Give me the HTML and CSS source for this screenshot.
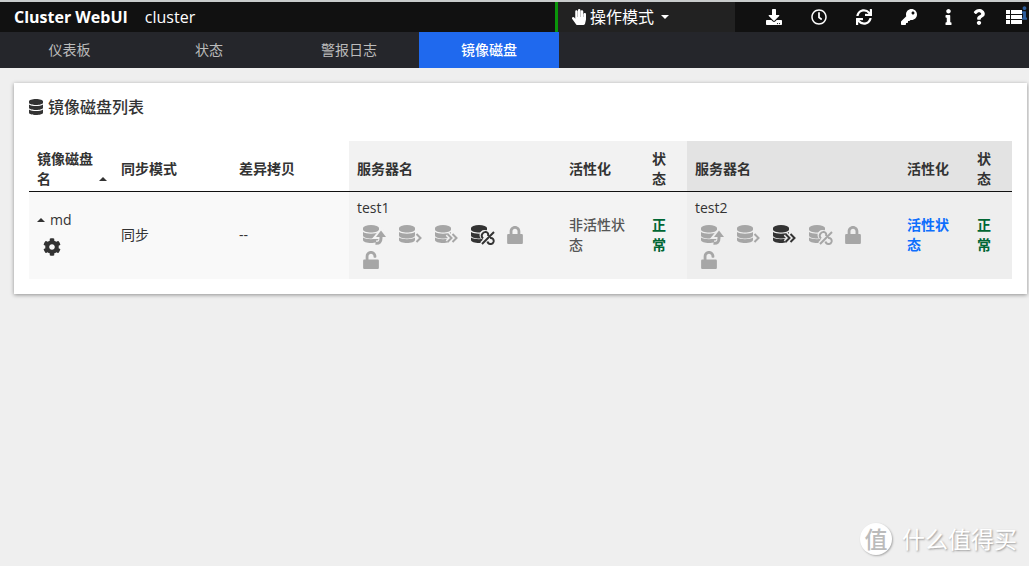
FILE: index.html
```html
<!DOCTYPE html>
<html lang="zh-CN">
<head>
<meta charset="utf-8">
<title>Cluster WebUI</title>
<link rel="stylesheet" href="styles.css">
</head>
<body>
<svg class="sprite" aria-hidden="true">
  <symbol id="database" viewBox="0 0 448 512"><path d="M448 73.143v45.714C448 159.143 347.667 192 224 192S0 159.143 0 118.857V73.143C0 32.857 100.333 0 224 0s224 32.857 224 73.143zM448 176v102.857C448 319.143 347.667 352 224 352S0 319.143 0 278.857V176c48.125 33.143 136.208 48.572 224 48.572S399.874 209.143 448 176zm0 160v102.857C448 479.143 347.667 512 224 512S0 479.143 0 438.857V336c48.125 33.143 136.208 48.572 224 48.572S399.874 369.143 448 336z"/></symbol>
  <symbol id="download" viewBox="0 0 512 512"><path d="M216 0h80c13.3 0 24 10.7 24 24v168h87.7c17.8 0 26.7 21.5 14.1 34.1L269.7 378.3c-7.5 7.5-19.8 7.5-27.3 0L90.1 226.1c-12.6-12.6-3.7-34.1 14.1-34.1H192V24c0-13.3 10.7-24 24-24zm296 376v112c0 13.3-10.7 24-24 24H24c-13.3 0-24-10.7-24-24V376c0-13.3 10.7-24 24-24h146.7l49 49c20.1 20.1 52.5 20.1 72.6 0l49-49H488c13.3 0 24 10.7 24 24zm-124 88c0-11-9-20-20-20s-20 9-20 20 9 20 20 20 20-9 20-20zm64 0c0-11-9-20-20-20s-20 9-20 20 9 20 20 20 20-9 20-20z"/></symbol>
  <symbol id="clock" viewBox="0 0 512 512"><path d="M256 8C119 8 8 119 8 256s111 248 248 248 248-111 248-248S393 8 256 8zm0 448c-110.5 0-200-89.5-200-200S145.5 56 256 56s200 89.5 200 200-89.5 200-200 200zm61.8-104.4l-84.9-61.7c-3.1-2.3-4.9-5.9-4.9-9.7V116c0-6.6 5.4-12 12-12h32c6.6 0 12 5.4 12 12v141.7l66.8 48.6c5.4 3.9 6.5 11.4 2.6 16.8L334.6 349c-3.9 5.3-11.4 6.5-16.8 2.6z"/></symbol>
  <symbol id="sync" viewBox="0 0 512 512"><path d="M440.65 12.57l4 82.77A247.16 247.16 0 0 0 255.83 8C134.73 8 33.91 94.92 12.29 209.82A12 12 0 0 0 24.09 224h49.05a12 12 0 0 0 11.67-9.26 175.91 175.91 0 0 1 317-56.94l-101.46-4.86a12 12 0 0 0-12.57 12v47.41a12 12 0 0 0 12 12H500a12 12 0 0 0 12-12V12a12 12 0 0 0-12-12h-47.37a12 12 0 0 0-11.98 12.57zM255.83 432a175.61 175.61 0 0 1-146-77.8l101.8 4.87a12 12 0 0 0 12.57-12v-47.4a12 12 0 0 0-12-12H12a12 12 0 0 0-12 12V500a12 12 0 0 0 12 12h47.35a12 12 0 0 0 12-12.6l-4.15-82.57A247.17 247.17 0 0 0 255.83 504c121.11 0 221.93-86.92 243.55-201.82a12 12 0 0 0-11.8-14.18h-49.05a12 12 0 0 0-11.67 9.26A175.86 175.86 0 0 1 255.83 432z"/></symbol>
  <symbol id="key" viewBox="0 0 512 512"><path d="M512 176.001C512 273.203 433.202 352 336 352c-11.22 0-22.19-1.062-32.827-3.069l-24.012 27.014A23.999 23.999 0 0 1 261.223 384H224v40c0 13.255-10.745 24-24 24h-40v40c0 13.255-10.745 24-24 24H24c-13.255 0-24-10.745-24-24v-78.059c0-6.365 2.529-12.47 7.029-16.971l161.802-161.802C163.108 213.814 160 195.271 160 176 160 78.798 238.797.001 335.999 0 433.488-.001 512 78.511 512 176.001zM336 128c0 26.51 21.49 48 48 48s48-21.49 48-48-21.49-48-48-48-48 21.49-48 48z"/></symbol>
  <symbol id="info" viewBox="0 0 192 512"><path d="M20 424.229h20V279.771H20c-11.046 0-20-8.954-20-20V212c0-11.046 8.954-20 20-20h112c11.046 0 20 8.954 20 20v212.229h20c11.046 0 20 8.954 20 20V492c0 11.046-8.954 20-20 20H20c-11.046 0-20-8.954-20-20v-47.771c0-11.046 8.954-20 20-20zM96 0C56.235 0 24 32.235 24 72s32.235 72 72 72 72-32.235 72-72S135.764 0 96 0z"/></symbol>
  <symbol id="question" viewBox="0 0 384 512"><path d="M202.021 0C122.202 0 70.503 32.703 29.914 91.026c-7.363 10.58-5.093 25.086 5.178 32.874l43.138 32.709c10.373 7.865 25.132 6.026 33.253-4.148 25.049-31.381 43.63-49.449 82.757-49.449 30.764 0 68.816 19.799 68.816 49.631 0 22.552-18.617 34.134-48.993 51.164-35.423 19.86-82.299 44.576-82.299 106.405V320c0 13.255 10.745 24 24 24h72.471c13.255 0 24-10.745 24-24v-5.773c0-42.86 125.268-44.645 125.268-160.627C377.504 66.256 286.902 0 202.021 0zM192 373.459c-38.196 0-69.271 31.075-69.271 69.271 0 38.195 31.075 69.27 69.271 69.27s69.271-31.075 69.271-69.271-31.075-69.27-69.271-69.27z"/></symbol>
  <symbol id="list" viewBox="0 0 16 16"><path d="M0 1h4v4H0zM5 1h11v4H5zM0 6h4v4H0zM5 6h11v4H5zM0 11h4v4H0zM5 11h11v4H5z"/></symbol>
  <symbol id="hand" viewBox="0 0 448 512"><path d="M408.781 128.007C386.356 127.578 368 146.36 368 168.79V256h-8V79.79c0-22.43-18.356-41.212-40.781-40.783C297.488 39.423 280 57.169 280 79v177h-8V40.79C272 18.36 253.644-.422 231.219.007 209.488.423 192 18.169 192 40v216h-8V80.79c0-22.43-18.356-41.212-40.781-40.783C121.488 40.423 104 58.169 104 80v235.992l-31.648-43.519c-12.993-17.866-38.009-21.817-55.877-8.823-17.865 12.994-21.815 38.01-8.822 55.877l125.601 172.705A48 48 0 0 0 172.073 512h197.59c22.274 0 41.622-15.324 46.724-37.006l26.508-112.66a192.011 192.011 0 0 0 5.104-43.975V168c.001-21.831-17.487-39.577-39.218-39.993z"/></symbol>
  <symbol id="lock" viewBox="0 0 448 512"><path d="M400 224h-24v-72C376 68.2 307.8 0 224 0S72 68.2 72 152v72H36c-20 0-36 16-36 36v216c0 20 16 36 36 36h376c20 0 36-16 36-36V260c0-20-16-36-36-36zm-104 0H152v-72c0-39.7 32.3-72 72-72s72 32.3 72 72v72z"/></symbol>
  <symbol id="unlock" viewBox="0 0 448 512"><path d="M412 240H152V152.900c0-39.600 31.700-72.500 71.300-72.900 40-.4 72.700 32.100 72.700 72v16c0 13.300 10.700 24 24 24h32c13.300 0 24-10.700 24-24v-16C376 68 307.500-.3 223.500 0 139.500.3 72 69.500 72 153.500V240H36c-20 0-36 16-36 36v200c0 20 16 36 36 36h376c20 0 36-16 36-36V276c0-20-16-36-36-36z"/></symbol>
  <symbol id="cog" viewBox="0 0 512 512"><path d="M487.4 315.7l-42.6-24.6c4.3-23.2 4.3-47 0-70.2l42.6-24.6c4.9-2.8 7.1-8.6 5.5-14-11.1-35.6-30-67.8-54.7-94.6-3.8-4.1-10-5.1-14.8-2.3L380.8 110c-17.9-15.4-38.5-27.3-60.8-35.1V25.8c0-5.6-3.9-10.5-9.4-11.7-36.7-8.2-74.3-7.8-109.2 0-5.5 1.2-9.4 6.1-9.4 11.7V75c-22.2 7.9-42.8 19.8-60.8 35.1L88.7 85.5c-4.9-2.8-11-1.9-14.8 2.3-24.7 26.7-43.6 58.9-54.7 94.6-1.7 5.4.6 11.2 5.5 14L67.3 221c-4.3 23.2-4.3 47 0 70.2l-42.6 24.6c-4.9 2.8-7.1 8.6-5.5 14 11.1 35.6 30 67.8 54.7 94.6 3.8 4.1 10 5.1 14.8 2.3l42.6-24.6c17.9 15.4 38.5 27.3 60.8 35.1v49.2c0 5.6 3.9 10.5 9.4 11.7 36.7 8.2 74.3 7.8 109.2 0 5.5-1.2 9.4-6.1 9.4-11.7v-49.2c22.2-7.9 42.8-19.8 60.8-35.1l42.6 24.6c4.9 2.8 11 1.9 14.8-2.3 24.7-26.7 43.6-58.9 54.7-94.6 1.5-5.5-.7-11.3-5.6-14.1zM256 336c-44.1 0-80-35.9-80-80s35.9-80 80-80 80 35.9 80 80-35.9 80-80 80z"/></symbol>
  <symbol id="caret-up" viewBox="0 0 8 4"><path d="M4 0l4 4H0z"/></symbol>
  <symbol id="caret-down" viewBox="0 0 8 4"><path d="M0 0h8L4 4z"/></symbol>
  <symbol id="disk" viewBox="0 0 16 18"><ellipse cx="8" cy="3" rx="8" ry="3"/><path d="M0 3h16v1.5c0 4-16 4-16 0zM0 7c3 2.200 13 2.200 16 0v3.500c0 4-16 4-16 0zM0 12.500c3 2.200 13 2.200 16 0v2.500c0 4-16 4-16 0z"/></symbol>
  <symbol id="disk-restore" viewBox="0 0 24 20"><use href="#disk" width="16" height="18"/><g class="halo"><path d="M13 18c4 0 5-2 5-5V9"/><path d="M14 11.500L18.500 6l4.500 5.500z"/></g><path class="line thick" d="M12.500 18.300c4 .3 5.500-1.500 5.500-5.300v-2.500"/><path d="M13 12L18 5.500l5 6.500z"/></symbol>
  <symbol id="disk-next" viewBox="0 0 24 20"><use href="#disk" width="16" height="18"/><path class="halo" d="M17.500 9l4 4-4 4"/><path class="line" d="M17.500 9l4 4-4 4"/></symbol>
  <symbol id="disk-forward" viewBox="0 0 24 20"><use href="#disk" width="16" height="18"/><path class="halo" d="M12.500 9l4 4-4 4m5-8l4 4-4 4"/><path class="line" d="M12.500 9l4 4-4 4m5-8l4 4-4 4"/></symbol>
  <symbol id="disk-detach" viewBox="0 0 24 20"><use href="#disk" width="16" height="18"/><g class="halo"><path d="M11 19L23 7"/><circle cx="13.500" cy="10" r="2.500"/><circle cx="19.500" cy="16" r="3"/></g><path class="line" d="M11 19L23 7M12 13.500c-3-3 0-7 3-6.500 2 .3 2.500 2 2 4M16.500 16.500c.5 3 5 3.500 6 .5.700-2.500-1-4.500-3.500-4"/></symbol>
</svg>

<header class="topbar">
  <div class="brand"><a class="product" href="#">Cluster WebUI</a><span>cluster</span></div>
  <button class="mode" type="button"><svg class="icon-narrow"><use href="#hand"/></svg><span>操作模式</span><svg class="caret"><use href="#caret-down"/></svg></button>
  <div class="tools">
    <div class="tool-group">
      <button type="button" aria-label="下载"><svg class="icon"><use href="#download"/></svg></button>
      <button type="button" aria-label="时间"><svg class="icon"><use href="#clock"/></svg></button>
      <button type="button" aria-label="刷新"><svg class="icon"><use href="#sync"/></svg></button>
      <button type="button" aria-label="密钥"><svg class="icon"><use href="#key"/></svg></button>
    </div>
    <div class="tool-group tight">
      <button type="button" aria-label="信息"><svg class="icon-info"><use href="#info"/></svg></button>
      <button type="button" aria-label="帮助"><svg class="icon-help"><use href="#question"/></svg></button>
      <button class="list" type="button" aria-label="列表"><svg class="icon"><use href="#list"/></svg><svg class="badge"><use href="#info"/></svg></button>
    </div>
  </div>
</header>
<nav class="tabs">
  <a href="#">仪表板</a>
  <a href="#">状态</a>
  <a href="#">警报日志</a>
  <a class="active" href="#" aria-current="page">镜像磁盘</a>
</nav>

<main class="card">
  <h1><svg class="icon-narrow"><use href="#database"/></svg>镜像磁盘列表</h1>
  <table>
    <colgroup><col class="c-name"><col class="c-mode"><col class="c-mode"><col class="c-server"><col class="c-active"><col class="c-state"><col class="c-server"><col class="c-active2"><col class="c-state"></colgroup>
    <thead>
      <tr>
        <th><div class="sortable"><span>镜像磁盘名</span><svg class="caret"><use href="#caret-up"/></svg></div></th>
        <th>同步模式</th><th>差异拷贝</th>
        <th class="first">服务器名</th><th class="first">活性化</th><th class="first">状态</th>
        <th class="second">服务器名</th><th class="second">活性化</th><th class="second">状态</th>
      </tr>
    </thead>
    <tbody>
      <tr>
        <td>
          <div class="disk-name"><svg class="caret"><use href="#caret-up"/></svg>md</div>
          <button class="settings" type="button" aria-label="设置"><svg class="gear"><use href="#cog"/></svg></button>
        </td>
        <td>同步</td><td>--</td>
        <td class="first">
          <div class="server">test1</div>
          <div class="actions">
            <button type="button" disabled aria-label="恢复"><svg class="disk"><use href="#disk-restore"/></svg></button>
            <button type="button" disabled aria-label="差异拷贝"><svg class="disk"><use href="#disk-next"/></svg></button>
            <button type="button" disabled aria-label="完全拷贝"><svg class="disk"><use href="#disk-forward"/></svg></button>
            <button type="button" aria-label="切断"><svg class="disk"><use href="#disk-detach"/></svg></button>
            <button type="button" disabled aria-label="锁定"><svg class="padlock"><use href="#lock"/></svg></button>
            <button type="button" disabled aria-label="解锁"><svg class="padlock"><use href="#unlock"/></svg></button>
          </div>
        </td>
        <td class="first inactive">非活性状态</td><td class="first normal">正常</td>
        <td class="second">
          <div class="server">test2</div>
          <div class="actions">
            <button type="button" disabled aria-label="恢复"><svg class="disk"><use href="#disk-restore"/></svg></button>
            <button type="button" disabled aria-label="差异拷贝"><svg class="disk"><use href="#disk-next"/></svg></button>
            <button type="button" aria-label="完全拷贝"><svg class="disk"><use href="#disk-forward"/></svg></button>
            <button type="button" disabled aria-label="切断"><svg class="disk"><use href="#disk-detach"/></svg></button>
            <button type="button" disabled aria-label="锁定"><svg class="padlock"><use href="#lock"/></svg></button>
            <button type="button" disabled aria-label="解锁"><svg class="padlock"><use href="#unlock"/></svg></button>
          </div>
        </td>
        <td class="second running">活性状态</td><td class="second normal">正常</td>
      </tr>
    </tbody>
  </table>
</main>
<div class="watermark"><span class="seal">值</span><span>什么值得买</span></div>
</body>
</html>
```
FILE: styles.css
```css
* { box-sizing: border-box; }
body {
  margin: 0;
  min-height: 100vh;
  background: #efefef;
  color: #333;
  font: 14px/20px "Open Sans", "Noto Sans CJK SC", sans-serif;
}
a { color: inherit; text-decoration: none; }
button { border: 0; padding: 0; background: none; color: inherit; font: inherit; display: flex; align-items: center; }
svg { fill: currentColor; flex: none; display: block; }
.sprite { position: absolute; width: 0; height: 0; }
.icon { width: 16px; height: 16px; }
.icon-narrow { width: 14px; height: 16px; }
.icon-info { width: 7px; height: 16px; }
.icon-help { width: 12px; height: 16px; }
.caret { width: 8px; height: 4px; }

.topbar {
  display: flex;
  height: 32px;
  border-top: 2px solid #c9cccc;
  background: #111;
  color: #fff;
  font-size: 16px;
}
.brand { flex: 1; display: flex; align-items: center; gap: 17px; padding-left: 14px; }
.product { font-weight: 700; }
.mode { width: 180px; border-left: 3px solid #0a960a; padding-left: 14px; gap: 4px; background: #222; }
.mode .caret { margin-left: 3px; }
.tools { display: flex; gap: 28px; padding: 0 7px 0 31px; }
.tool-group { display: flex; align-items: center; gap: 29px; }
.tight { gap: 21px; }
.list { position: relative; }
.badge { position: absolute; left: 16px; top: -3px; width: 5px; height: 14px; color: #2e5f9e; }

.tabs { display: flex; height: 36px; background: #25262b; color: #bbb; }
.tabs a { width: 140px; display: flex; align-items: center; justify-content: center; }
.tabs a:first-child { width: 139px; }
.tabs .active { background: #1f69ee; color: #fff; font-weight: 500; }

.card { margin: 15px 2px 0 14px; padding: 14px 15px 15px; background: #fff; box-shadow: 0 1px 4px rgba(0, 0, 0, .4); }
h1 { display: flex; align-items: center; gap: 5px; margin: 0 0 24px; font-size: 16px; line-height: 20px; font-weight: 500; }

table { width: 100%; table-layout: fixed; border-collapse: separate; border-spacing: 0; }
.c-name { width: 84px; }
.c-mode { width: 118px; }
.c-server { width: 212px; }
.c-active { width: 83px; }
.c-active2 { width: 70px; }
.c-state { width: 43px; }
th, td { padding: 0 8px; text-align: left; vertical-align: middle; }
th { height: 51px; padding-top: 6px; border-bottom: 1px solid #111; font-weight: 700; }
th.first { background: #f2f2f2; }
th.second { background: #e3e3e3; }
td { padding-top: 6px; padding-bottom: 7px; background: #f9f9f9; --cell: #f9f9f9; }
td.first { background: #f3f3f3; --cell: #f3f3f3; }
td.second { background: #eee; --cell: #eee; }
.sortable { display: flex; align-items: flex-end; }
.sortable span { flex: 1; }
.sortable .caret { margin: 0 -2px 8px 0; }
.disk-name { display: flex; align-items: center; gap: 5px; }
.settings { padding: 8px 6px 5px; }
.gear { width: 18px; height: 18px; }
.actions { display: flex; flex-wrap: wrap; padding: 4px 0 0 6px; }
.actions button { width: 36px; height: 25px; }
.actions button:disabled { color: #a6a6a6; }
.disk { width: 24px; height: 20px; }
.padlock { width: 16px; height: 18px; }
.line { fill: none; stroke: currentColor; stroke-width: 2; }
.thick { stroke-width: 3; }
.halo { fill: none; stroke: var(--cell); stroke-width: 5; }
.inactive { color: #555; font-weight: 500; }
.normal { color: #006633; font-weight: 700; }
.running { color: #0d6efd; font-weight: 700; }

.watermark { position: absolute; right: 12px; bottom: 11px; display: flex; align-items: center; gap: 10px; color: #fff; font-size: 23px; line-height: 32px; text-shadow: 1px 1px 2px #999; }
.seal { width: 32px; border-radius: 50%; background: #fff; color: #bbb; font-weight: 500; text-align: center; text-shadow: none; box-shadow: 1px 1px 2px #aaa; }
```
